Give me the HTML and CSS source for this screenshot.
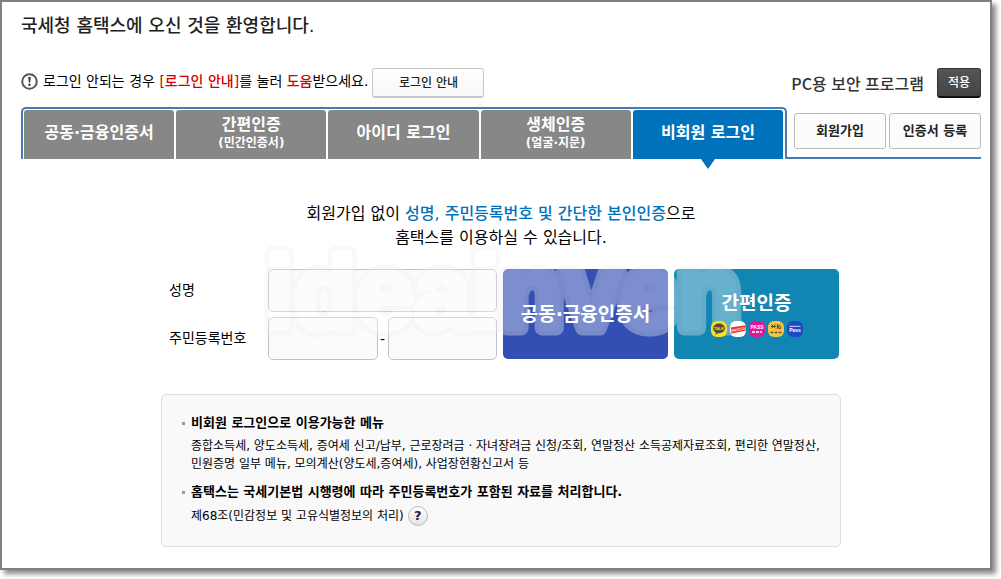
FILE: index.html
```html
<!DOCTYPE html>
<html lang="ko">
<head>
    <meta charset="UTF-8">
    <meta name="viewport" content="width=device-width, initial-scale=1.0">
    <title>국세청 홈택스 - 비회원 로그인</title>
    <link rel="stylesheet" href="styles.css">
</head>
<body>
    <main class="window">
        <h1>국세청 홈택스에 오신 것을 환영합니다.</h1>

        <div class="top-row">
            <svg class="notice-icon" viewBox="0 0 17 17" width="17" height="17" aria-hidden="true">
                <circle cx="8.5" cy="8.5" r="7.3" fill="none" stroke="#555" stroke-width="2"/>
                <path d="M7.3 4h2.4l-.5 5.6H7.8z" fill="#333"/>
                <circle cx="8.5" cy="11.8" r="1.2" fill="#333"/>
            </svg>
            <p class="notice">로그인 안되는 경우 <em>[로그인 안내]</em>를 눌러 <em>도움</em>받으세요.</p>
            <button type="button" class="btn-guide">로그인 안내</button>
            <span class="security">PC용 보안 프로그램</span>
            <button type="button" class="btn-apply">적용</button>
        </div>

        <div class="nav-row">
            <nav class="tabs">
                <a href="#cert">공동·금융인증서</a>
                <a href="#simple">간편인증<small>(민간인증서)</small></a>
                <a href="#id">아이디 로그인</a>
                <a href="#bio">생체인증<small>(얼굴·지문)</small></a>
                <a href="#guest" class="active">비회원 로그인</a>
            </nav>
            <div class="side">
                <button type="button">회원가입</button>
                <button type="button">인증서 등록</button>
            </div>
        </div>

        <div class="content" id="guest">
            <p class="intro">회원가입 없이 <strong>성명, 주민등록번호 및 간단한 본인인증</strong>으로<br>홈택스를 이용하실 수 있습니다.</p>

            <form class="login-form">
                <div class="fields">
                    <label for="name">성명</label>
                    <input type="text" id="name">
                    <label for="rrn1">주민등록번호</label>
                    <div class="rrn">
                        <input type="text" id="rrn1" maxlength="6">
                        <span>-</span>
                        <input type="password" id="rrn2" maxlength="7" aria-label="주민등록번호 뒷자리">
                    </div>
                </div>
                <button type="button" class="auth auth-cert"><span class="auth-label">공동·금융인증서</span></button>
                <button type="button" class="auth auth-simple">
                    <span class="auth-label">간편인증</span>
                    <span class="badges">
                        <svg viewBox="0 0 16 16" width="16" height="16">
                            <rect width="16" height="16" rx="6" fill="#f5e11d"/>
                            <ellipse cx="8" cy="7.4" rx="6" ry="4.8" fill="#5b4a35"/>
                            <path d="M5 10.5l-.6 3.2 3.6-2z" fill="#5b4a35"/>
                            <text x="8" y="9" font-size="4" fill="#f5e11d">TALK</text>
                        </svg>
                        <svg viewBox="0 0 16 16" width="16" height="16">
                            <rect width="16" height="16" rx="6" fill="#fff"/>
                            <path d="M.8 6.6l14.8-2.4v5.6L1.4 12.6z" fill="#ed2b2e"/>
                            <text x="8" y="10" font-size="4" fill="#fff" transform="rotate(-10 8 8)">PAYCO</text>
                        </svg>
                        <svg viewBox="0 0 16 16" width="16" height="16">
                            <rect width="16" height="16" rx="6" fill="#e5159b"/>
                            <text x="8" y="8" font-size="5" fill="#fff">PASS</text>
                            <path d="M3 11h3M7 11h3M11 11h2" stroke="#fff" stroke-width="1.6"/>
                        </svg>
                        <svg viewBox="0 0 16 16" width="16" height="16">
                            <rect width="16" height="16" rx="6" fill="#f6c644"/>
                            <path d="M3.4 3.4l4 4M3.4 7.4l4-4M2.8 5.4h5.2M9.4 3v5M12.4 3.4L9.6 5.8l1.6 1.6" stroke="#493b2b" stroke-width=".9" fill="none"/>
                            <circle cx="11.9" cy="6.6" r="1.2" fill="none" stroke="#493b2b" stroke-width=".8"/>
                            <path d="M2.5 11.6h3M6.5 11.6h3M10.5 11.6h3" stroke="#6c5531" stroke-width="1.5"/>
                        </svg>
                        <svg viewBox="0 0 16 16" width="16" height="16">
                            <rect width="16" height="16" rx="6" fill="#1d48c8"/>
                            <path d="M2.5 5.4h11" stroke="#c4d2f5" stroke-width="1.3" stroke-dasharray="1.4 .3"/>
                            <text x="8" y="11" font-size="5" fill="#fff">Pass</text>
                        </svg>
                    </span>
                </button>
                <!-- outline layer below, letter layer above -->
                <svg class="watermark" viewBox="0 0 484 100" width="484" height="100" aria-hidden="true">
                    <use href="#mark" stroke="#f0f0f0" stroke-width="15"/>
                    <text id="mark" x="7" y="84">ideainven</text>
                    <use href="#mark" stroke="#fff" stroke-width="6"/>
                </svg>
            </form>

            <section class="info">
                <h2>비회원 로그인으로 이용가능한 메뉴</h2>
                <p>종합소득세, 양도소득세, 증여세 신고/납부, 근로장려금 · 자녀장려금 신청/조회, 연말정산 소득공제자료조회, 편리한 연말정산,<br>민원증명 일부 메뉴, 모의계산(양도세,증여세), 사업장현황신고서 등</p>
                <h2>홈택스는 국세기본법 시행령에 따라 주민등록번호가 포함된 자료를 처리합니다.</h2>
                <p class="law">제68조(민감정보 및 고유식별정보의 처리) <button type="button" class="help" aria-label="도움말">?</button></p>
            </section>
        </div>
    </main>
</body>
</html>
```

FILE: styles.css
```css
* {
    margin: 0;
    padding: 0;
    box-sizing: border-box;
}

body {
    display: flex;
    min-height: 100vh;
    padding: 0 9px 9px 0;
    background: #fff;
    color: #000;
    font-family: "DejaVu Sans", "Noto Sans CJK KR", sans-serif;
    font-size: 14px;
    line-height: 20px;
}

button, input {
    font: inherit;
}

button {
    cursor: pointer;
}

.window {
    flex: 1;
    min-width: 0;
    padding: 10px 9px 20px 19px;
    border: 2px solid #808080;
    background: #fff;
    box-shadow: 4px 4px 5px #8a8a8a;
}

h1 {
    font-size: 18px;
    font-weight: 500;
    line-height: 28px;
    color: #222;
}

/* notice and security program */
.top-row {
    display: flex;
    align-items: center;
    margin-top: 28px;
}

.notice-icon {
    flex: none;
    margin: 0 5px 4px 0;
}

.notice {
    padding-bottom: 4px;
    white-space: nowrap;
}

.notice em {
    font-style: normal;
    font-weight: 500;
    color: #d00000;
}

.btn-guide {
    width: 112px;
    height: 30px;
    margin-left: 4px;
    border: 1px solid #c8c8c8;
    border-bottom-width: 2px;
    border-radius: 3px;
    background: linear-gradient(#fff, #f7f7f7);
    color: #222;
    font-size: 12px;
    font-weight: 500;
}

.security {
    margin-left: auto;
    color: #333;
    font-family: "Noto Sans CJK KR", sans-serif;
    font-size: 16px;
    font-weight: 500;
    white-space: nowrap;
}

.btn-apply {
    width: 44px;
    height: 30px;
    margin-left: 13px;
    border: 1px solid #333;
    border-bottom: 2px solid #111;
    border-radius: 3px;
    background: linear-gradient(#555, #444);
    color: #fff;
    font-size: 12px;
    font-weight: 500;
}

/* tabs */
.nav-row {
    display: flex;
    margin-top: 9px;
}

.tabs {
    flex: 1;
    display: flex;
    gap: 2px;
    height: 52px;
    padding: 1px 2px 0 1px;
    border: 2px solid #4a7ab5;
    border-bottom: 0;
    border-radius: 5px 5px 0 0;
}

.tabs a {
    position: relative;
    flex: 1;
    display: flex;
    flex-direction: column;
    align-items: center;
    justify-content: center;
    padding-bottom: 3px;
    border-radius: 3px 3px 0 0;
    background: #878787;
    color: #fff;
    font-size: 16px;
    font-weight: bold;
    text-decoration: none;
    white-space: nowrap;
}

.tabs small {
    font-size: 12px;
    line-height: 16px;
}

.tabs .active {
    background: #0072bc;
}

.tabs .active::after {
    content: '';
    position: absolute;
    top: 100%;
    left: 50%;
    margin-left: -7px;
    border: 7px solid transparent;
    border-top: 10px solid #0072bc;
    border-bottom: 0;
}

.side {
    display: flex;
    gap: 3px;
    width: 194px;
    padding: 6px 0 8px 7px;
    border-bottom: 2px solid #4a7ab5;
}

.side button {
    flex: 1;
    border: 1px solid #bbb;
    border-radius: 3px;
    background: #fcfcfc;
    color: #222;
    font-size: 13px;
    font-weight: bold;
    white-space: nowrap;
}

/* guest login */
.content {
    max-width: 680px;
    margin: 43px auto 0;
}

.intro {
    font-size: 16px;
    line-height: 24px;
    text-align: center;
}

.intro strong {
    font-weight: 500;
    color: #0072bc;
}

.login-form {
    position: relative;
    display: flex;
    gap: 6px;
    margin-top: 19px;
    padding: 0 2px 0 8px;
}

.fields {
    flex: 1;
    display: grid;
    grid-template-columns: 99px 1fr;
    gap: 5px 0;
    align-items: center;
}

.fields label {
    padding-bottom: 2px;
}

.fields input {
    width: 100%;
    min-width: 0;
    height: 43px;
    padding: 0 8px;
    border: 1px solid #bcc2cb;
    border-radius: 5px;
    background: #fbfbfb;
}

.rrn {
    display: flex;
    align-items: center;
}

.rrn span {
    flex: none;
    width: 10px;
    text-align: center;
}

.auth {
    width: 165px;
    height: 90px;
    border: 0;
    border-radius: 5px;
    color: #fff;
    font-size: 19px;
    font-weight: bold;
    line-height: 24px;
}

.auth-cert {
    background: #344fb4;
}

.auth-simple {
    background: #1186b3;
}

/* labels and badges stay above the watermark */
.auth-label, .badges {
    position: relative;
    z-index: 1;
}

.badges {
    display: flex;
    justify-content: center;
    gap: 3px;
    margin-top: 6px;
}

.badges text {
    font-family: "Liberation Sans", sans-serif;
    font-weight: bold;
    text-anchor: middle;
}

.watermark {
    position: absolute;
    top: -25px;
    left: 97px;
    fill: #fff;
    font-family: "Liberation Sans", sans-serif;
    font-size: 103px;
    font-weight: bold;
    opacity: 0.36;
    overflow: visible;
    pointer-events: none;
    stroke-linejoin: round;
}

.info {
    margin-top: 34px;
    padding: 18px 0 20px 29px;
    border: 1px solid #ddd;
    border-radius: 5px;
    background: #f9f9f9;
    font-size: 12px;
    line-height: 18px;
}

.info h2 {
    position: relative;
    font-size: 13px;
    line-height: 20px;
}

.info h2::before {
    content: '';
    position: absolute;
    top: 9px;
    left: -9px;
    width: 3px;
    height: 3px;
    background: #999;
}

.info p {
    margin: 4px 0 9px;
}

.info .law {
    display: flex;
    align-items: center;
    gap: 4px;
    margin-bottom: 0;
}

.help {
    width: 20px;
    height: 20px;
    border: 1px solid #bbb;
    border-radius: 50%;
    background: linear-gradient(#fff, #e4e4e4);
    color: #222;
    font-size: 13px;
    font-weight: bold;
    line-height: 18px;
}
```
